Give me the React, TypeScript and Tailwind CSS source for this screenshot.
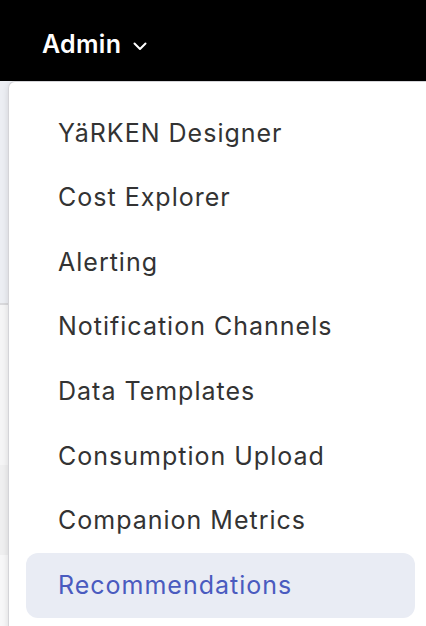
import React from "react";

const items = [
  "YäRKEN Designer",
  "Cost Explorer",
  "Alerting",
  "Notification Channels",
  "Data Templates",
  "Consumption Upload",
  "Companion Metrics",
  "Recommendations",
];

export default function App() {
  return (
    <div
      className="relative w-[426px] h-[626px] overflow-hidden bg-white"
      style={{ fontFamily: "Inter, 'Noto Sans', sans-serif" }}
    >
      <header className="h-[81px] bg-black flex items-center pl-[42px] pt-[9px]">
        <span className="text-white text-[25px] font-semibold tracking-[0.3px]">Admin</span>
        <svg width="14" height="9" viewBox="0 0 14 9" className="ml-[12px] mt-[2px]" fill="none">
          <path d="M1.5 1.5 L7 7 L12.5 1.5" stroke="white" strokeWidth="2" strokeLinecap="round" strokeLinejoin="round" />
        </svg>
      </header>
      <div className="flex flex-col">
        <div className="h-[222px] bg-[#eceef3]" />
        <div className="h-[2px] bg-[#d9d9dc]" />
        <div className="h-[160px] bg-[#f5f5f6]" />
        <div className="h-[90px] bg-[#efeff0]" />
        <div className="h-[80px] bg-[#f7f7f8]" />
      </div>
      <div className="absolute left-[8px] top-[81px] w-[440px] h-[560px] bg-white rounded-tl-[7px] border-l border-t border-[#d4d4d8] shadow-[0_2px_6px_rgba(0,0,0,0.12)] pt-[19px] pl-[17px]">
        <ul className="flex flex-col w-[389px]">
          {items.map((label, i) => {
            const active = i === items.length - 1;
            return (
              <li
                key={label}
                className={
                  "h-[64.6px] flex items-center pl-[32px] text-[25px] tracking-[1px] rounded-[12px] " +
                  (active ? "bg-[#e9ecf4] text-[#4a5bbf]" : "text-[#333333]")
                }
              >
                {label}
              </li>
            );
          })}
        </ul>
      </div>
    </div>
  );
}
